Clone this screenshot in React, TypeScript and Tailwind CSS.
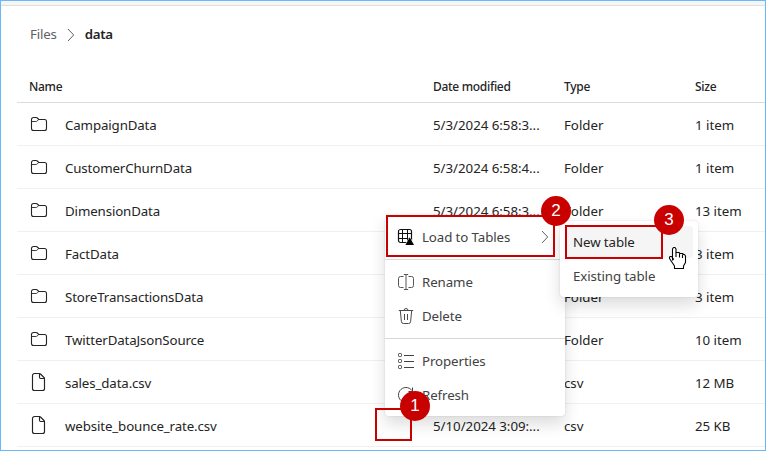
import React from "react";

type Row = { name: string; date: string; type: string; size: string };

const rows: Row[] = [
  { name: "CampaignData", date: "5/3/2024 6:58:3...", type: "Folder", size: "1 item" },
  { name: "CustomerChurnData", date: "5/3/2024 6:58:4...", type: "Folder", size: "1 item" },
  { name: "DimensionData", date: "5/3/2024 6:58:3...", type: "Folder", size: "13 item" },
  { name: "FactData", date: "5/3/2024 6:58:3...", type: "Folder", size: "3 item" },
  { name: "StoreTransactionsData", date: "5/3/2024 6:58:3...", type: "Folder", size: "3 item" },
  { name: "TwitterDataJsonSource", date: "5/3/2024 6:58:3...", type: "Folder", size: "10 item" },
  { name: "sales_data.csv", date: "5/10/2024 3:09:...", type: "csv", size: "12 MB" },
  { name: "website_bounce_rate.csv", date: "5/10/2024 3:09:...", type: "csv", size: "25 KB" },
];

function FolderIcon() {
  return (
    <svg width="18" height="16" viewBox="0 0 18 16" fill="none" stroke="#242424" strokeWidth="1.100">
      <path d="M1.5 3.5a2 2 0 0 1 2-2h2.600c.5 0 .9.2 1.200.5L8.800 3.500h5.700a2 2 0 0 1 2 2v7a2 2 0 0 1-2 2h-11a2 2 0 0 1-2-2z" />
      <path d="M1.500 5.500h4.400c.5 0 .9-.2 1.200-.5l1.700-1.500" strokeWidth=".9" />
    </svg>
  );
}

function FileIcon() {
  return (
    <svg width="18" height="20" viewBox="0 0 18 20" fill="none" stroke="#242424" strokeWidth="1.150">
      <path d="M4.500 1.500h4.800c.5 0 .9.2 1.200.5l3.500 3.500c.3.3.5.7.5 1.200V16.500a2 2 0 0 1-2 2H4.500a2 2 0 0 1-2-2v-13a2 2 0 0 1 2-2z" />
      <path d="M9.500 1.800V5.300c0 .8.500 1.200 1.200 1.200h3.600" />
    </svg>
  );
}

function Chevron({ className }: { className: string }) {
  return (
    <svg className={className} width="8" height="14" viewBox="0 0 8 14" fill="none" stroke="#616161" strokeWidth="1">
      <path d="M1 1l5.700 6L1 13" />
    </svg>
  );
}

function GridIcon() {
  return (
    <svg width="18" height="18" viewBox="0 0 18 18" fill="none" stroke="#111" strokeWidth="1">
      <rect x="1.500" y="1.500" width="13" height="13" rx="2" strokeWidth="1.200" />
      <path d="M5.500 1.500v13M10.500 1.500v13M1.500 5.500h13M1.500 10.500h13" />
      <path d="M12.700 8l5 9.500h-10z" fill="#fff" stroke="none" />
      <path d="M12.700 9.300l4.300 7.700H8.400z" fill="#000" stroke="none" />
    </svg>
  );
}

function RenameIcon() {
  return (
    <svg width="18" height="18" viewBox="0 0 18 18" fill="none" stroke="#555" strokeWidth="1">
      <path d="M6.500 3.500h-3a2 2 0 0 0-2 2v7a2 2 0 0 0 2 2h3M11.500 3.500h3a2 2 0 0 1 2 2v7a2 2 0 0 1-2 2h-3M9 1.500v15M6.800 1.500h4.400M6.800 16.500h4.400" />
    </svg>
  );
}

function TrashIcon() {
  return (
    <svg width="18" height="18" viewBox="0 0 18 18" fill="none" stroke="#4b4b4b" strokeWidth="1">
      <path d="M1.800 3.500h14.400M7 3.500a2 2 0 0 1 4 0M3.300 3.700l1.100 11a2 2 0 0 0 2 1.800h5.200a2 2 0 0 0 2-1.800L14.700 3.700M7.500 7v6M10.500 7v6" />
    </svg>
  );
}

function PropertiesIcon() {
  return (
    <svg width="18" height="18" viewBox="0 0 18 18" fill="none" stroke="#424242" strokeWidth="1">
      <rect x="1.500" y="1.500" width="3" height="3" rx=".8" />
      <rect x="1.500" y="7.500" width="3" height="3" rx=".8" />
      <rect x="1.500" y="13.500" width="3" height="3" rx=".8" />
      <path d="M7 3.500h10M7 9.500h10M7 15.500h10" />
    </svg>
  );
}

function RefreshIcon() {
  return (
    <svg width="18" height="18" viewBox="0 0 18 18" fill="none" stroke="#424242" strokeWidth="1">
      <path d="M15 4.500A7.500 7.500 0 1 0 16.500 9M15.500 1.500v4h-4" />
    </svg>
  );
}

function HandCursor() {
  return (
    <svg className="absolute left-[661px] top-[241px]" width="30" height="30" viewBox="0 0 30 30" fill="#fff" stroke="#000" strokeWidth="1.100" strokeLinejoin="round">
      <path d="M10.500 18V7l1-1.500h1.500l1 1.500v3.500h3l1 1h2.500l1 1h1l1 1.500v6.500l-2 3.500v2.500h-9v-2.500l-2-3-3-4.500v-1.500l1-.5h1l2 2.500z" />
      <path d="M14 10.500V15M17.500 11.500V15.500M20.500 12.500V16" fill="none" />
    </svg>
  );
}

const headCell = "pt-[2px] text-[12px] font-medium leading-4 tracking-[-0.3px]";
const cellText = "pt-[3px] tracking-[-0.03px]";

function MenuItem({ icon, label }: { icon: React.ReactNode; label: string }) {
  return (
    <div className="flex h-[34px] items-center gap-[7px] pl-3">
      {icon}
      <span className="pt-[2px] tracking-[-0.1px]">{label}</span>
    </div>
  );
}

export default function App() {
  return (
    <div className="relative h-[451px] w-[766px] overflow-hidden border border-[#6cb8f6] bg-white font-['Noto_Sans','Open_Sans',sans-serif] text-[13.300px] text-[#242424]">
      <div className="h-[5px] border-b border-[#e0e0e0] bg-[#f5f5f5]" />
      <nav className="flex h-[57px] items-center pl-[29px]">
        <span className="tracking-[-0.2px] text-[#616161]">Files</span>
        <Chevron className="ml-[10px] mr-[10px]" />
        <span className="font-semibold tracking-[-0.3px]">data</span>
      </nav>
      <div className="ml-4">
        <div className="grid h-10 grid-cols-[416px_131px_131px_1fr] items-center border-b border-[#dcdcdc] pt-[6px]">
          <span className={`${headCell} pl-3`}>Name</span>
          <span className={headCell}>Date modified</span>
          <span className={headCell}>Type</span>
          <span className={headCell}>Size</span>
        </div>
        {rows.map((r) => (
          <div key={r.name} className="grid h-[43px] grid-cols-[416px_131px_131px_1fr] items-center whitespace-nowrap border-b border-[#f0f0f0]">
            <div className="flex items-center gap-[17px] pl-[13px]">
              {r.type === "Folder" ? <FolderIcon /> : <FileIcon />}
              <span className="pt-[3px] tracking-[-0.13px]">{r.name}</span>
            </div>
            <span className={cellText}>{r.date}</span>
            <span className={cellText}>{r.type}</span>
            <span className={cellText}>{r.size}</span>
          </div>
        ))}
      </div>

      <div className="absolute left-[384px] top-[214px] h-[201px] w-[180px] rounded bg-white pt-[5px] text-[#424242] shadow-[0_8px_16px_rgba(0,0,0,0.14),0_0_2px_rgba(0,0,0,0.12)]">
        <div className="relative">
          <MenuItem icon={<GridIcon />} label="Load to Tables" />
          <Chevron className="absolute right-4 top-[10px]" />
        </div>
        <div className="my-[5px] h-px bg-[#d8d8d8]" />
        <MenuItem icon={<RenameIcon />} label="Rename" />
        <MenuItem icon={<TrashIcon />} label="Delete" />
        <div className="my-[5px] h-px bg-[#d8d8d8]" />
        <MenuItem icon={<PropertiesIcon />} label="Properties" />
        <MenuItem icon={<RefreshIcon />} label="Refresh" />
      </div>

      <div className="absolute left-[559px] top-[220px] h-[76px] w-[138px] rounded bg-white p-[5px] tracking-[-0.1px] shadow-[0_8px_16px_rgba(0,0,0,0.14),0_0_2px_rgba(0,0,0,0.12)]">
        <div className="flex h-8 items-center rounded bg-[#f5f5f5] pl-2 pt-[2px]">New table</div>
        <div className="mt-[2px] flex h-8 items-center pl-2 pt-[2px] text-[#424242]">Existing table</div>
      </div>

      <div className="absolute left-[385px] top-[214px] h-[42px] w-[169px] border-2 border-[#c80000]" />
      <div className="absolute left-[564px] top-[224px] h-[34px] w-[98px] border-2 border-[#c80000]" />
      <div className="absolute left-[374px] top-[407px] h-[33px] w-[37px] border-2 border-[#c80000]" />
      <div className="absolute left-[540px] top-[195px] flex size-[30px] items-center justify-center rounded-full bg-[#c80000] font-['Liberation_Sans',sans-serif] text-[17px] text-white">2</div>
      <div className="absolute left-[653px] top-[204px] flex size-[30px] items-center justify-center rounded-full bg-[#c80000] font-['Liberation_Sans',sans-serif] text-[17px] text-white">3</div>
      <div className="absolute left-[399px] top-[390px] flex size-[30px] items-center justify-center rounded-full bg-[#c80000] font-['Liberation_Sans',sans-serif] text-[17px] text-white">1</div>
      <HandCursor />
    </div>
  );
}
